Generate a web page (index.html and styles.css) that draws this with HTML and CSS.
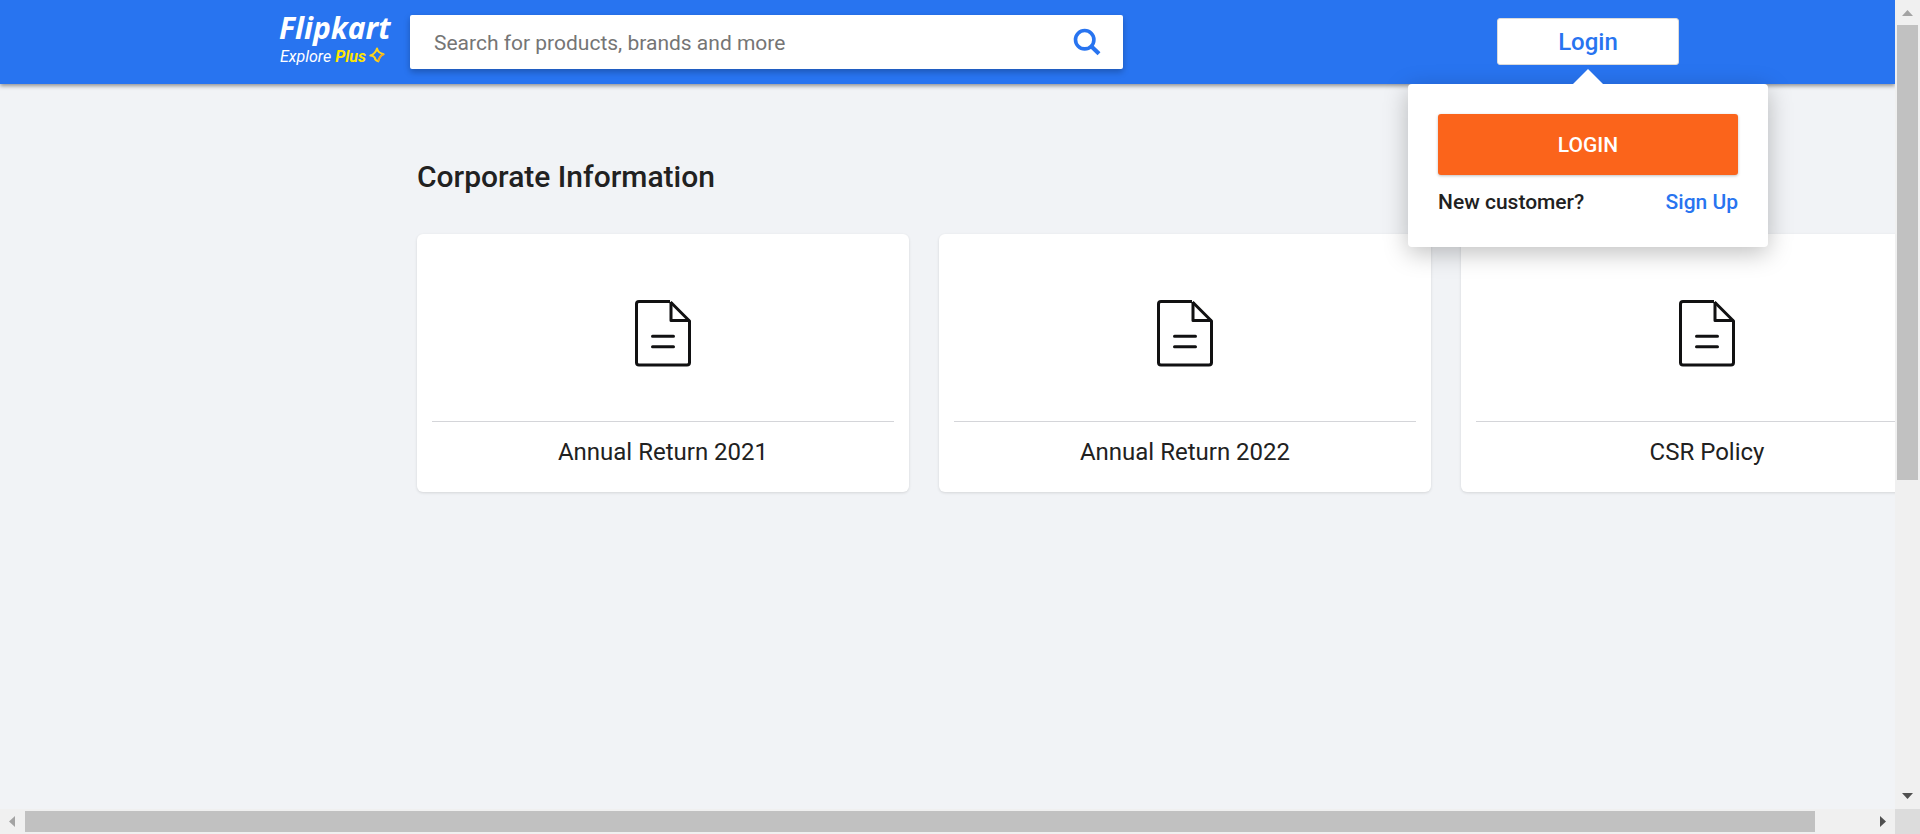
FILE: index.html
```html
<!DOCTYPE html>
<html lang="en">
<head>
<meta charset="utf-8">
<title>Corporate Information</title>
<link rel="stylesheet" href="styles.css">
</head>
<body>
<svg class="symbols" aria-hidden="true">
  <symbol id="document" viewBox="0 0 58 68">
    <g fill="none" stroke="#111112" stroke-width="3">
      <path d="M36 1.500H5Q2.500 1.500 2.500 4V62.500Q2.500 65 5 65H53Q55.500 65 55.500 62.500V21L36.500 2" stroke-linejoin="round"/>
      <path d="M37 2V20.500H55.500" stroke-linejoin="round"/>
      <path d="M18.500 36.200H39.500M18.500 46.700H39.500" stroke-linecap="round"/>
    </g>
  </symbol>
</svg>
<div class="window">
  <div class="page">
    <header class="header">
      <div class="header-inner">
        <a class="logo" href="#">
          <span class="logo-name">Flipkart</span>
          <span class="logo-sub">Explore <b>Plus</b><svg class="logo-star" viewBox="0 0 16 16" aria-hidden="true"><path d="M8 1.400Q8.800 5.800 14.600 7.200Q10.400 9.200 9.300 14.400Q5.800 13.400 5.800 10.600Q4.600 9 1.300 8.600Q6.600 6.400 8 1.400Z" fill="none" stroke="#ffd51c" stroke-width="2" stroke-linejoin="round"/><path d="M14.600 7.200Q10.400 9.200 9.300 14.400" fill="none" stroke="#f5a31f" stroke-width="1.500"/></svg></span>
        </a>
        <form class="search">
          <input type="text" aria-label="Search" placeholder="Search for products, brands and more">
          <button type="button" aria-label="Submit search">
            <svg viewBox="0 0 28 28" aria-hidden="true"><g fill="none" stroke="#2874f0"><circle cx="11.700" cy="11.700" r="9.200" stroke-width="3.600"/><path d="M18.500 18.500L26 25.800" stroke-width="4.200"/></g></svg>
          </button>
        </form>
        <div class="account">
          <button class="login-button" type="button">Login</button>
          <div class="menu">
            <button class="menu-login" type="button">LOGIN</button>
            <div class="menu-row"><span>New customer?</span><a href="#">Sign Up</a></div>
          </div>
        </div>
      </div>
    </header>
    <main class="content">
      <h1>Corporate Information</h1>
      <div class="cards">
        <a class="card" href="#"><span class="card-icon"><svg><use href="#document"/></svg></span><span class="card-title">Annual Return 2021</span></a>
        <a class="card" href="#"><span class="card-icon"><svg><use href="#document"/></svg></span><span class="card-title">Annual Return 2022</span></a>
        <a class="card" href="#"><span class="card-icon"><svg><use href="#document"/></svg></span><span class="card-title">CSR Policy</span></a>
      </div>
    </main>
  </div>
  <div class="bar bar-vertical" aria-hidden="true">
    <svg class="arrow" viewBox="0 0 25 25"><path d="M7 16L12.500 10L18 16Z" fill="#a3a3a3"/></svg>
    <div class="track"><div class="thumb"></div></div>
    <svg class="arrow" viewBox="0 0 25 25"><path d="M7 9L12.500 15L18 9Z" fill="#505050"/></svg>
  </div>
  <div class="bar bar-horizontal" aria-hidden="true">
    <svg class="arrow" viewBox="0 0 25 25"><path d="M15 7L9 12.500L15 18Z" fill="#a3a3a3"/></svg>
    <div class="track"><div class="thumb"></div></div>
    <svg class="arrow" viewBox="0 0 25 25"><path d="M10 7L16 12.500L10 18Z" fill="#505050"/></svg>
  </div>
  <div class="corner"></div>
</div>
</body>
</html>
```
FILE: styles.css
```css
* { box-sizing: border-box; }
body { margin: 0; font-family: Roboto, "Liberation Sans", sans-serif; color: #212121; }
button, input { font-family: inherit; border: 0; margin: 0; padding: 0; }
a { color: inherit; text-decoration: none; }
.symbols { display: none; }

.window { display: grid; grid-template: minmax(0, 1fr) 25px / minmax(0, 1fr) 25px; height: 100vh; }
.page { overflow: hidden; background: #f1f3f6; }

.header { position: relative; z-index: 1; padding-left: 279px; background: #2874f0; box-shadow: 0 2px 4px rgba(0, 0, 0, .4); }
.header-inner { display: flex; align-items: center; max-width: 1400px; height: 84px; }
.logo { display: flex; flex-direction: column; flex: none; gap: 9px; width: 131px; color: #fff; font-style: italic; }
.logo-name { font: italic 700 30px/20px "Noto Sans", sans-serif; }
.logo-sub { display: flex; align-items: center; padding-left: 1px; font-size: 16px; line-height: 18px; white-space: pre; }
.logo-sub b { font-weight: 700; color: #ffe500; }
.logo-star { width: 16px; height: 16px; margin: 0 0 3px 3px; }

.search { display: flex; flex: 0 1 713px; height: 54px; background: #fff; border-radius: 2px; box-shadow: 0 3px 6px rgba(0, 0, 0, .25); }
.search input { flex: 1; min-width: 0; padding: 2px 0 0 24px; background: none; font-size: 21px; outline: 0; }
.search input::placeholder { color: #757575; opacity: 1; }
.search button { width: 72px; background: none; }
.search svg { display: block; width: 28px; height: 28px; margin: 0 auto; }

.account { position: relative; margin: 0 0 1px auto; }
.login-button { display: block; width: 182px; height: 47px; border: 1px solid #dbdbdb; border-radius: 3px; background: #fff; color: #2874f0; font-size: 24px; font-weight: 500; }
.menu { position: absolute; top: 66px; left: 50%; width: 360px; margin-left: -180px; padding: 30px 30px 32px; border-radius: 4px; background: #fff; box-shadow: 0 6px 24px rgba(0, 0, 0, .25); font-size: 21px; font-weight: 500; }
.menu::before { content: ""; position: absolute; top: -15px; left: 50%; margin-left: -15px; border: solid transparent; border-width: 0 15px 15px; border-bottom-color: #fff; }
.menu-login { display: block; width: 100%; height: 61px; border-radius: 3px; background: #fb641b; color: #fff; font-size: 21px; font-weight: 500; box-shadow: 0 1px 3px rgba(0, 0, 0, .25); }
.menu-row { display: flex; justify-content: space-between; padding-top: 15px; line-height: 25px; }
.menu-row a { color: #2874f0; }

.content { padding: 74px 0 0 417px; }
h1 { margin: 0; font-size: 30px; font-weight: 500; line-height: 38px; }
.cards { display: grid; grid-template-columns: repeat(3, 492px); gap: 30px; margin-top: 38px; }
.card { padding: 0 15px; border-radius: 6px; background: #fff; box-shadow: 0 1px 3px rgba(0, 0, 0, .12); }
.card-icon { display: flex; align-items: center; justify-content: center; height: 188px; padding-top: 12px; border-bottom: 1px solid #d4d5d9; }
.card-icon svg { width: 58px; height: 68px; }
.card-title { display: block; padding: 15px 0 25px; font-size: 24px; line-height: 30px; text-align: center; }

.bar { display: flex; background: #f0f0f0; }
.bar-vertical { flex-direction: column; }
.arrow { flex: none; width: 25px; height: 25px; }
.track { flex: 1; }
.thumb { background: #c1c1c1; }
.bar-vertical .thumb { height: 60%; margin: 0 2px; }
.bar-horizontal .thumb { width: 97%; height: 21px; margin: 2px 0; }
.corner { background: #dcdcdc; }
```
